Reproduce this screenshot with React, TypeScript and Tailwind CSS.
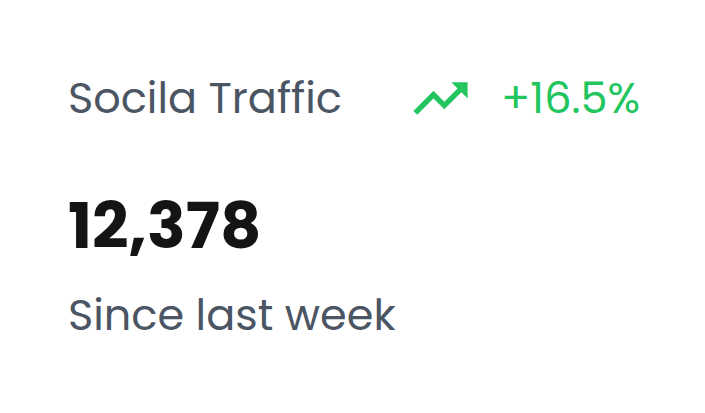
import React from "react";
import { MdTrendingUp } from "react-icons/md";

export default function App() {
  return (
    <div className="w-[705px] h-[413px] bg-white font-['Poppins','Inter',sans-serif]">
      <div className="pl-[68px] pt-[72px]">
        <div className="flex items-center h-[52px]">
          <h3 className="text-[43px] text-[#4b5563] w-[340px] leading-none">
            Socila Traffic
          </h3>
          <MdTrendingUp className="text-[#22c55e] w-[65px] h-[65px]" />
          <span className="text-[43px] text-[#22c55e] ml-[28px] leading-none">
            +16.5%
          </span>
        </div>
        <p className="text-[64px] font-bold text-[#141414] mt-[70px] leading-none">
          12,378
        </p>
        <p className="text-[43px] text-[#4b5563] mt-[36px] leading-none">
          Since last week
        </p>
      </div>
    </div>
  );
}
